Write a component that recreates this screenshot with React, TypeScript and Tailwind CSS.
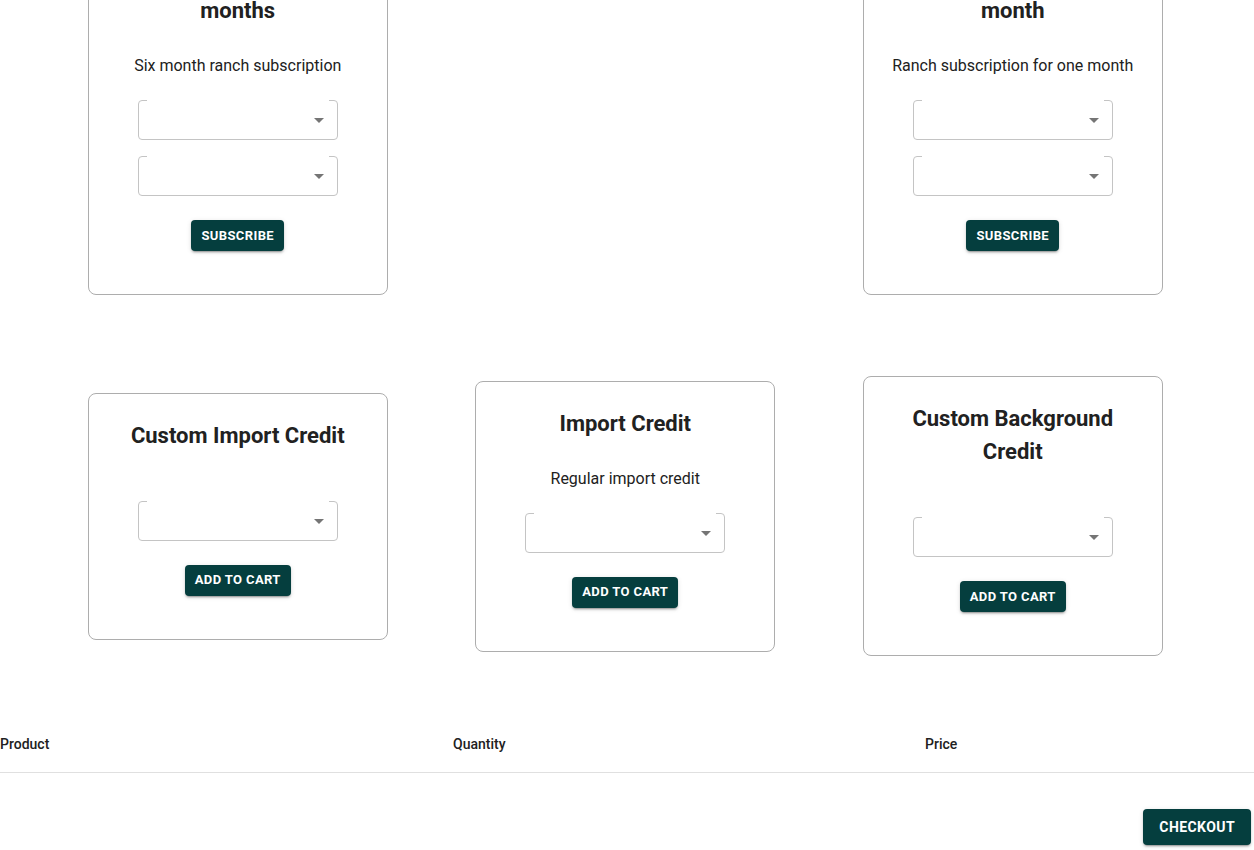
import React from "react";

type Product = {
  title: string[];
  desc: string;
  selects: number;
  action: string;
};

// 上段：サブスクリプション（中央は空き）
const topRow: (Product | null)[] = [
  { title: ["Ranch Subscription 6", "months"], desc: "Six month ranch subscription", selects: 2, action: "Subscribe" },
  null,
  { title: ["Ranch Subscription 1", "month"], desc: "Ranch subscription for one month", selects: 2, action: "Subscribe" },
];

// 下段：クレジット
const bottomRow: Product[] = [
  { title: ["Custom Import Credit"], desc: "", selects: 1, action: "Add to cart" },
  { title: ["Import Credit"], desc: "Regular import credit", selects: 1, action: "Add to cart" },
  { title: ["Custom Background Credit"], desc: "", selects: 1, action: "Add to cart" },
];

const btnShadow =
  "shadow-[0_3px_1px_-2px_rgba(0,0,0,0.2),0_2px_2px_0_rgba(0,0,0,0.14),0_1px_5px_0_rgba(0,0,0,0.12)]";

// アウトラインのセレクト（空ラベルのノッチ付き）
function Select() {
  return (
    <div className="relative w-[200px] h-10">
      <fieldset className="absolute inset-x-0 bottom-0 -top-[5px] m-0 px-2 border border-[#c4c4c4] rounded pointer-events-none">
        <legend className="invisible p-0 h-[11px] w-[182px] text-[12px]" />
      </fieldset>
      <svg viewBox="0 0 24 24" className="absolute right-[7px] top-2 w-6 h-6 fill-[#757575]">
        <path d="M7 10l5 5 5-5z" />
      </svg>
    </div>
  );
}

function Card({ p }: { p: Product }) {
  return (
    <div className="w-[300px] border border-[#adadad] rounded-lg px-6 pt-[25px] pb-[43px] flex flex-col items-center text-center">
      <h2 className="text-[22px] leading-[33px] font-bold text-[#212121]">
        {p.title.map((t, i) => (
          <span key={i} className="block">{t}</span>
        ))}
      </h2>
      <p className="mt-[27px] mb-[22px] text-base leading-6 text-[#212121]">{p.desc}</p>
      <div className="flex flex-col gap-4">
        {Array.from({ length: p.selects }).map((_, i) => (
          <Select key={i} />
        ))}
      </div>
      <button
        className={`mt-6 h-[31px] px-[10px] rounded bg-[#053e3e] text-white text-[13px] font-bold uppercase tracking-[0.03em] ${btnShadow}`}
      >
        {p.action}
      </button>
    </div>
  );
}

export default function App() {
  return (
    <div className="w-[1254px] min-h-[850px] bg-white font-['Roboto',sans-serif] overflow-hidden">
      {/* 商品カード */}
      <div className="ml-[44px] -mt-[65px] grid grid-cols-[repeat(3,387.5px)] gap-y-[81px] items-center justify-items-center">
        {topRow.map((p, i) => (p ? <Card key={i} p={p} /> : <div key={i} />))}
        {bottomRow.map((p, i) => (
          <Card key={"b" + i} p={p} />
        ))}
      </div>

      {/* カートテーブル */}
      <div className="mt-[60px] grid grid-cols-[453px_472px_1fr] border-b border-[#e0e0e0] text-sm font-medium text-[#212121]">
        <div className="py-4 leading-6">Product</div>
        <div className="py-4 leading-6">Quantity</div>
        <div className="py-4 leading-6">Price</div>
      </div>

      <div className="flex justify-end pr-[3px] mt-9">
        <button
          className={`h-9 px-4 rounded bg-[#053e3e] text-white text-[14px] font-bold uppercase tracking-[0.03em] ${btnShadow}`}
        >
          Checkout
        </button>
      </div>
    </div>
  );
}
